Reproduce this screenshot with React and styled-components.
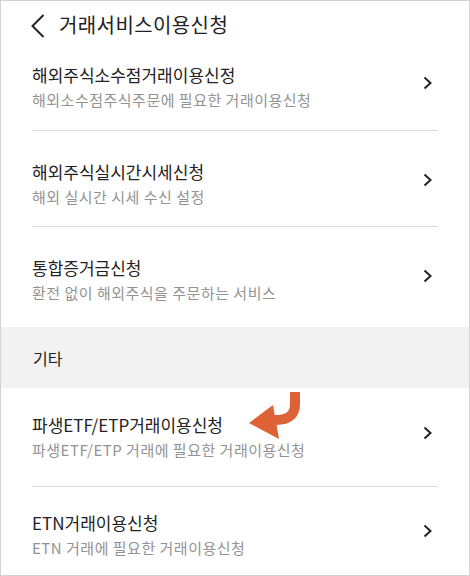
import styled, { createGlobalStyle } from 'styled-components'

const GlobalStyle = createGlobalStyle`
  body {
    margin: 0;
    background: #fff;
    font-family: "Noto Sans CJK KR", "Noto Sans", sans-serif;
  }
`

const Screen = styled.div`
  width: 470px;
  height: 576px;
  box-sizing: border-box;
  border: 1px solid #d2d2d2;
  background: #fff;
  overflow: hidden;
  display: flex;
  flex-direction: column;
`

const Header = styled.div`
  height: 51px;
  display: flex;
  align-items: center;
  padding-left: 30px;
  gap: 14px;
  flex-shrink: 0;
`

const HeaderTitle = styled.h1`
  margin: 0;
  font-size: 20px;
  font-weight: 400;
  color: #222;
  letter-spacing: 0.4px;
  position: relative;
  top: -2px;
`

const BackIcon = styled.svg`
  position: relative;
  top: -1px;
`

const Group = styled.div`
  display: flex;
  flex-direction: column;
`

const Row = styled.div`
  position: relative;
  display: flex;
  align-items: center;
  margin: 0 31px;
  padding: ${p => p.$top}px 0 ${p => p.$bottom}px;
  border-bottom: ${p => (p.$last ? 'none' : '1px solid #dcdcdc')};
`

const Texts = styled.div`
  flex: 1;
  display: flex;
  flex-direction: column;
  gap: 3px;
`

const Title = styled.div`
  font-size: 17px;
  line-height: 24px;
  color: #222;
  letter-spacing: 0;
`

const Sub = styled.div`
  font-size: 15px;
  line-height: 20px;
  color: #939393;
  letter-spacing: 0.5px;
`

const Chevron = styled.span`
  margin-right: 6px;
  position: relative;
  top: -4px;
  display: flex;
`

const Section = styled.div`
  background: #f2f2f2;
  height: 61px;
  display: flex;
  align-items: center;
  padding-left: 32px;
  font-size: 16px;
  color: #222;
  flex-shrink: 0;
`

const Pointer = styled.svg`
  position: absolute;
  left: 216px;
  top: 4px;
`

const items1 = [
  { title: '해외주식소수점거래이용신정', sub: '해외소수점주식주문에 필요한 거래이용신청', top: 11, bottom: 20 },
  { title: '해외주식실시간시세신청', sub: '해외 실시간 시세 수신 설정', top: 29, bottom: 19 },
  { title: '통합증거금신청', sub: '환전 없이 해외주식을 주문하는 서비스', top: 29, bottom: 24, last: true },
]

const items2 = [
  { title: '파생ETF/ETP거래이용신청', sub: '파생ETF/ETP 거래에 필요한 거래이용신청', top: 25, bottom: 26, arrow: true },
  { title: 'ETN거래이용신청', sub: 'ETN 거래에 필요한 거래이용신청', top: 24, bottom: 27 },
]

const Arrow = () => (
  <svg width="9" height="14" viewBox="0 0 9 14">
    <polyline points="1.5,1.5 7.5,7 1.5,12.5" fill="none" stroke="#222" strokeWidth="2" />
  </svg>
)

const Item = ({ item }) => (
  <Row $top={item.top} $bottom={item.bottom} $last={item.last}>
    <Texts>
      <Title>{item.title}</Title>
      <Sub>{item.sub}</Sub>
    </Texts>
    <Chevron><Arrow /></Chevron>
    {item.arrow && (
      <Pointer width="56" height="48" viewBox="0 0 56 48">
        <path d="M47 0 V12 Q47 28 28 28 H20" fill="none" stroke="#dd6236" strokeWidth="10" />
        <polygon points="1,31 25,13 31,47" fill="#dd6236" />
      </Pointer>
    )}
  </Row>
)

const App = () => {
  return (
    <Screen>
      <GlobalStyle />
      <Header>
        <BackIcon width="14" height="24" viewBox="0 0 14 24">
          <polyline points="12.5,1 1.5,12 12.5,23" fill="none" stroke="#222" strokeWidth="2" />
        </BackIcon>
        <HeaderTitle>거래서비스이용신청</HeaderTitle>
      </Header>
      <Group>
        {items1.map(it => <Item key={it.title} item={it} />)}
      </Group>
      <Section>기타</Section>
      <Group>
        {items2.map(it => <Item key={it.title} item={it} />)}
      </Group>
    </Screen>
  )
}

export default App
